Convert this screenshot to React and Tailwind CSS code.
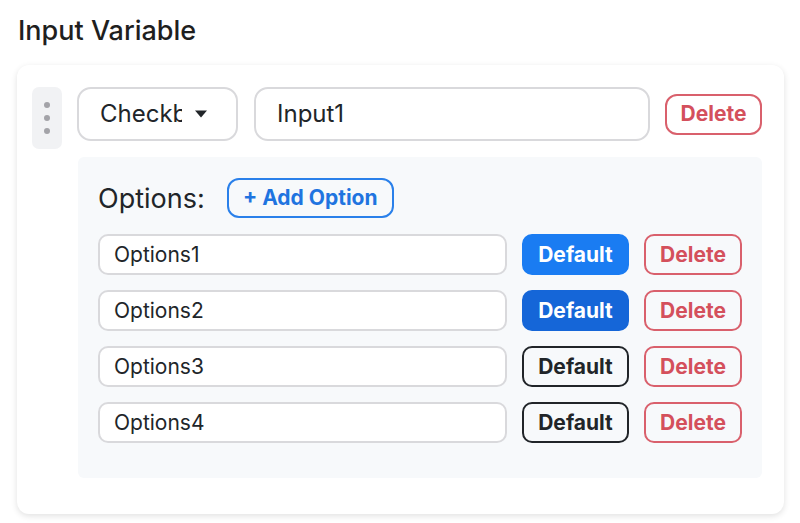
import React from "react";

const font = { fontFamily: "Inter, 'Noto Sans', sans-serif" };

function OptionRow({ label, variant }) {
  const def =
    variant === "primary"
      ? "bg-[#1a7cf2] border-[#1a7cf2] text-white"
      : variant === "active"
      ? "bg-[#1566d8] border-[#1566d8] text-white"
      : "bg-transparent border-[#212529] text-[#212529]";
  return (
    <div className="flex items-center gap-[15px] h-[41px]">
      <div className="w-[409px] h-[41px] rounded-[10px] border-2 border-[#d9d9dc] bg-white flex items-center pl-[14px] text-[21px] text-[#212529]">
        {label}
      </div>
      <div
        className={`w-[107px] h-[41px] rounded-[10px] border-2 flex items-center justify-center text-[21px] font-bold ${def}`}
      >
        Default
      </div>
      <div className="w-[98px] h-[41px] rounded-[10px] border-2 border-[#d9606c] text-[#d4505c] flex items-center justify-center text-[21px] font-bold">
        Delete
      </div>
    </div>
  );
}

export default function App() {
  return (
    <div className="w-[800px] h-[523px] bg-white overflow-hidden" style={font}>
      <div className="pl-[18px] pt-[12px] h-[65px] text-[27px] font-medium text-[#1f1f1f] leading-[38px]">
        Input Variable
      </div>
      <div className="ml-[17px] w-[767px] h-[449px] rounded-[12px] bg-white shadow-[0_2px_6px_rgba(0,0,0,0.12)] pl-[15px] pt-[22px] flex items-start gap-[15px]">
        <div className="w-[30px] h-[62px] rounded-[7px] bg-[#f1f2f4] flex flex-col items-center justify-center gap-[7px]">
          <span className="w-[6px] h-[6px] rounded-full bg-[#a3a3a8]" />
          <span className="w-[6px] h-[6px] rounded-full bg-[#a3a3a8]" />
          <span className="w-[6px] h-[6px] rounded-full bg-[#a3a3a8]" />
        </div>
        <div className="flex flex-col w-[685px] gap-[16px]">
          <div className="flex items-center h-[54px]">
            <div className="w-[161px] h-[54px] rounded-[14px] border-2 border-[#d9d9dc] bg-white flex items-center pl-[21px] pr-[26px] gap-[12px] text-[24px] text-[#212529]">
              <span className="overflow-hidden whitespace-nowrap w-[82px]">Checkbox</span>
              <svg width="14" height="8" viewBox="0 0 14 8">
                <path d="M1 0.5 L13 0.5 L7 7.5 Z" fill="#212529" />
              </svg>
            </div>
            <div className="ml-[16px] w-[396px] h-[54px] rounded-[14px] border-2 border-[#d9d9dc] bg-white flex items-center pl-[21px] text-[24px] text-[#212529]">
              Input1
            </div>
            <div className="ml-[15px] w-[97px] h-[41px] rounded-[12px] border-2 border-[#d9606c] text-[#d4505c] flex items-center justify-center text-[21px] font-bold">
              Delete
            </div>
          </div>
          <div className="ml-[1px] w-[684px] h-[321px] rounded-[6px] bg-[#f7f9fb] pl-[20px] pt-[21px] flex flex-col gap-[16px]">
            <div className="flex items-center h-[40px] gap-[22px]">
              <span className="text-[27px] text-[#212529] pt-[3px]">Options:</span>
              <div className="w-[167px] h-[40px] rounded-[12px] border-2 border-[#2a80ea] text-[#1f74e0] flex items-center justify-center text-[21px] font-bold">
                + Add Option
              </div>
            </div>
            <div className="flex flex-col gap-[15px]">
              <OptionRow label="Options1" variant="primary" />
              <OptionRow label="Options2" variant="active" />
              <OptionRow label="Options3" variant="outline" />
              <OptionRow label="Options4" variant="outline" />
            </div>
          </div>
        </div>
      </div>
    </div>
  );
}
